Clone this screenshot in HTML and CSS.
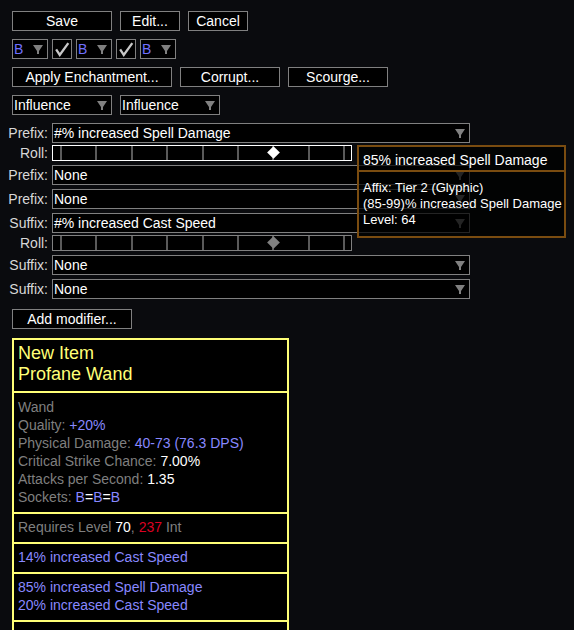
FILE: index.html
```html
<!DOCTYPE html>
<html>
	<head>
		<meta charset="UTF-8">
		<title>Craft Item</title>
		<link rel="stylesheet" href="styles.css">
	</head>
	<body>
		<div class="page">
			<!-- top buttons -->
			<div class="row">
				<button class="btn w100">Save</button>
				<button class="btn w60">Edit...</button>
				<button class="btn w60">Cancel</button>
			</div>

			<!-- sockets and links -->
			<div class="row tight">
				<div class="dd small"><span class="blue">B</span><svg class="arrow" viewBox="0 0 10 9"><path d="M0 0h10L6 6v3H4V6z"/></svg></div>
				<div class="check"><svg viewBox="0 0 20 20"><path d="M3.5 10.5 7.5 16.5 17 3.5"/></svg></div>
				<div class="dd small"><span class="blue">B</span><svg class="arrow" viewBox="0 0 10 9"><path d="M0 0h10L6 6v3H4V6z"/></svg></div>
				<div class="check"><svg viewBox="0 0 20 20"><path d="M3.5 10.5 7.5 16.5 17 3.5"/></svg></div>
				<div class="dd small"><span class="blue">B</span><svg class="arrow" viewBox="0 0 10 9"><path d="M0 0h10L6 6v3H4V6z"/></svg></div>
			</div>

			<div class="row">
				<button class="btn w160">Apply Enchantment...</button>
				<button class="btn w100">Corrupt...</button>
				<button class="btn w100">Scourge...</button>
			</div>

			<div class="row">
				<div class="dd w100"><span>Influence</span><svg class="arrow" viewBox="0 0 10 9"><path d="M0 0h10L6 6v3H4V6z"/></svg></div>
				<div class="dd w100"><span>Influence</span><svg class="arrow" viewBox="0 0 10 9"><path d="M0 0h10L6 6v3H4V6z"/></svg></div>
			</div>

			<!-- affixes -->
			<div class="mods">
				<div class="affix">
					<div class="line">
						<span class="lbl">Prefix:</span>
						<div class="dd wide"><span>#% increased Spell Damage</span><svg class="arrow" viewBox="0 0 10 9"><path d="M0 0h10L6 6v3H4V6z"/></svg></div>
					</div>
					<div class="line roll">
						<span class="lbl">Roll:</span>
						<div class="slider active">
							<i></i><i></i><i></i><i></i><i></i><i></i><i></i><i></i><i></i>
							<b class="knob"></b>
						</div>
					</div>
				</div>
				<div class="affix">
					<div class="line">
						<span class="lbl">Prefix:</span>
						<div class="dd wide"><span>None</span><svg class="arrow" viewBox="0 0 10 9"><path d="M0 0h10L6 6v3H4V6z"/></svg></div>
					</div>
				</div>
				<div class="affix">
					<div class="line">
						<span class="lbl">Prefix:</span>
						<div class="dd wide"><span>None</span><svg class="arrow" viewBox="0 0 10 9"><path d="M0 0h10L6 6v3H4V6z"/></svg></div>
					</div>
				</div>
				<div class="affix">
					<div class="line">
						<span class="lbl">Suffix:</span>
						<div class="dd wide"><span>#% increased Cast Speed</span><svg class="arrow" viewBox="0 0 10 9"><path d="M0 0h10L6 6v3H4V6z"/></svg></div>
					</div>
					<div class="line roll">
						<span class="lbl">Roll:</span>
						<div class="slider">
							<i></i><i></i><i></i><i></i><i></i><i></i><i></i><i></i><i></i>
							<b class="knob"></b>
						</div>
					</div>
				</div>
				<div class="affix">
					<div class="line">
						<span class="lbl">Suffix:</span>
						<div class="dd wide"><span>None</span><svg class="arrow" viewBox="0 0 10 9"><path d="M0 0h10L6 6v3H4V6z"/></svg></div>
					</div>
				</div>
				<div class="affix">
					<div class="line">
						<span class="lbl">Suffix:</span>
						<div class="dd wide"><span>None</span><svg class="arrow" viewBox="0 0 10 9"><path d="M0 0h10L6 6v3H4V6z"/></svg></div>
					</div>
				</div>
			</div>

			<button class="btn w120 add">Add modifier...</button>

			<!-- item preview -->
			<div class="item">
				<div class="item-head">
					<div>New Item</div>
					<div>Profane Wand</div>
				</div>
				<div class="sec first">
					<div class="gray">Wand</div>
					<div><span class="gray">Quality: </span><span class="magic">+20%</span></div>
					<div><span class="gray">Physical Damage: </span><span class="magic">40-73 (76.3 DPS)</span></div>
					<div><span class="gray">Critical Strike Chance: </span>7.00%</div>
					<div><span class="gray">Attacks per Second: </span>1.35</div>
					<div><span class="gray">Sockets: </span><span class="magic">B</span>=<span class="magic">B</span>=<span class="magic">B</span></div>
				</div>
				<div class="sec">
					<div><span class="gray">Requires Level </span>70<span class="gray">, </span><span class="red">237</span><span class="gray"> Int</span></div>
				</div>
				<div class="sec magic">
					<div>14% increased Cast Speed</div>
				</div>
				<div class="sec magic">
					<div>85% increased Spell Damage</div>
					<div>20% increased Cast Speed</div>
				</div>
				<div class="sec empty"></div>
			</div>

			<!-- hover tooltip for the rolled prefix -->
			<div class="tip">
				<div class="tip-title">85% increased Spell Damage</div>
				<div class="tip-body">
					<div>Affix: Tier 2 (Glyphic)</div>
					<div>(85-99)% increased Spell Damage</div>
					<div>Level: 64</div>
				</div>
			</div>
		</div>
	</body>
</html>
```
FILE: styles.css
```css
* {
	margin: 0;
	padding: 0;
	box-sizing: border-box;
}

body {
	background: #0a0b0e;
	color: #fff;
	font: 14px/18px "Liberation Sans", sans-serif;
}

.page {
	position: relative;
	padding: 11px 12px 0;
	display: flex;
	flex-direction: column;
	align-items: flex-start;
}

.row {
	display: flex;
	gap: 8px;
	height: 20px;
	margin-bottom: 8px;
}

.row.tight {
	gap: 4px;
}

.btn {
	height: 20px;
	border: 1px solid #808080;
	background: #000;
	color: #fff;
	font: inherit;
	display: flex;
	align-items: center;
	justify-content: center;
}

.w60 { width: 60px; }
.w100 { width: 100px; }
.w120 { width: 120px; }
.w160 { width: 160px; }

/* drop down lists */
.dd {
	height: 20px;
	border: 1px solid #808080;
	background: #000;
	display: flex;
	align-items: center;
	justify-content: space-between;
	padding: 0 4px 0 1px;
	white-space: nowrap;
}

.dd.small { width: 36px; }
.dd.wide { width: 418px; }

.arrow {
	width: 10px;
	height: 9px;
	fill: #808080;
	flex: none;
}

.blue {
	color: #7070ff;
}

.check {
	width: 20px;
	height: 20px;
	border: 1px solid #808080;
	background: #000;
}

.check svg {
	display: block;
	width: 18px;
	height: 18px;
	fill: none;
	stroke: #c8c8c8;
	stroke-width: 2.6;
}

/* affix selectors */
.mods {
	display: flex;
	flex-direction: column;
	gap: 4px;
	margin-left: -6px;
}

.line {
	display: flex;
	gap: 4px;
	height: 20px;
	align-items: center;
}

.line.roll {
	height: 16px;
	margin-top: 2px;
}

.lbl {
	width: 42px;
	text-align: right;
	color: #d8d8d8;
	white-space: nowrap;
}

.slider {
	position: relative;
	width: 300px;
	height: 16px;
	border: 1px solid #808080;
	background: #000;
	display: flex;
	justify-content: space-between;
	padding: 0 6px 0 7px;
}

.slider.active {
	border-color: #fff;
}

.slider i {
	width: 2px;
	background: #5a5a5a;
}

.knob {
	position: absolute;
	left: 216px;
	top: 2px;
	width: 9px;
	height: 9px;
	background: #808080;
	transform: rotate(45deg);
}

.slider.active .knob {
	background: #fff;
}

.add {
	margin-top: 10px;
}

/* item preview */
.item {
	margin-top: 9px;
	width: 277px;
	border: 2px solid #ffff77;
	background: #000;
}

.item-head {
	padding: 3px 4px 6px;
	color: #ffff77;
	font-size: 18px;
	line-height: 21px;
}

.sec {
	border-top: 2px solid #ffff77;
	padding: 4px 4px 6px;
}

.sec.first {
	padding-top: 5px;
}

.sec.empty {
	height: 40px;
}

.gray { color: #7f7f7f; }
.magic { color: #8888ff; }
.red { color: #dd0022; }

/* mod tooltip */
.tip {
	position: absolute;
	left: 357px;
	top: 145px;
	width: 209px;
	height: 93px;
	border: 2px solid #7a4c10;
	background: rgba(0, 0, 0, 0.72);
	white-space: nowrap;
}

.tip-title {
	height: 25px;
	padding: 4px 4px 0;
	border-bottom: 2px solid #7a4c10;
}

.tip-body {
	padding: 8px 4px 0;
	font-size: 13px;
	line-height: 16px;
}
```
